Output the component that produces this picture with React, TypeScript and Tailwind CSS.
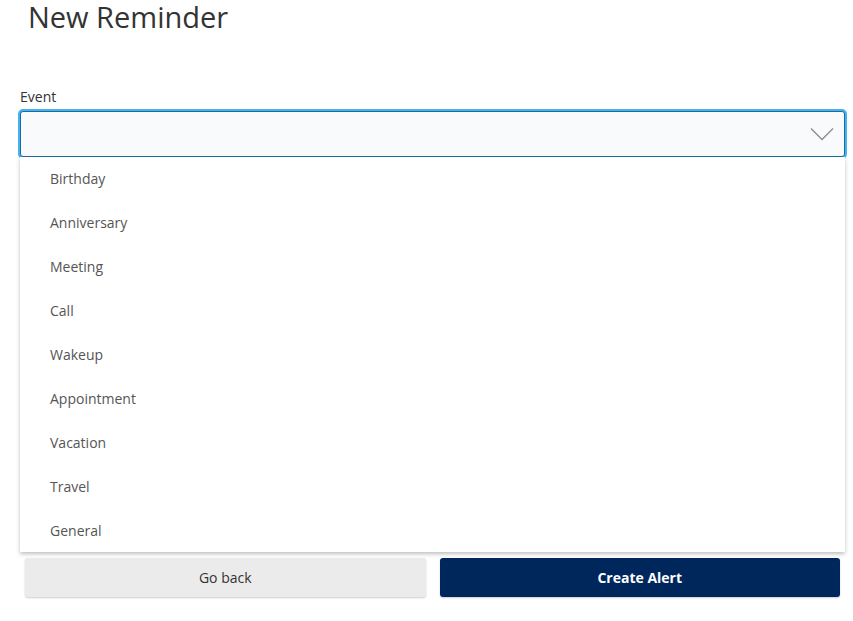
import React from "react";

const events = [
  "Birthday",
  "Anniversary",
  "Meeting",
  "Call",
  "Wakeup",
  "Appointment",
  "Vacation",
  "Travel",
  "General",
];

function Chevron() {
  return (
    <svg width="24" height="14" viewBox="0 0 24 14" fill="none">
      <path d="M1 1.5L12 12.5L23 1.5" stroke="#8c8c8c" strokeWidth="1.3" />
    </svg>
  );
}

export default function App() {
  return (
    <div
      className="min-h-screen bg-white text-[#333]"
      style={{ fontFamily: '"Open Sans", "Noto Sans", sans-serif' }}
    >
      <h1 className="pl-[28px] text-[29px] leading-[34px] font-normal text-[#333]">
        New Reminder
      </h1>

      <div className="ml-5 w-[825px] mt-[53px]">
        <label className="block text-[14px] leading-5 text-[#333] mb-[4px]">
          Event
        </label>
        <div className="flex items-center justify-between h-[46px] rounded-[3px] border border-[#1d6b9e] ring-2 ring-[#45b3f2] bg-[#f9fafc] pr-[10px]">
          <span />
          <Chevron />
        </div>

        <ul className="bg-white shadow-[0_2px_4px_rgba(0,0,0,0.25)]">
          {events.map((e) => (
            <li
              key={e}
              className="h-[43.9px] flex items-center pl-[30px] text-[14px] text-[#555]"
            >
              {e}
            </li>
          ))}
        </ul>

        <div className="mt-[6px] px-[5px] flex gap-[14px]">
          <button className="flex-1 h-[39px] rounded-[3px] bg-[#ebebeb] text-[14px] text-[#333] shadow-[0_1px_2px_rgba(0,0,0,0.2)]">
            Go back
          </button>
          <button className="flex-1 h-[39px] rounded-[3px] bg-[#00275c] text-[14px] font-bold text-white shadow-[0_1px_2px_rgba(0,0,0,0.2)]">
            Create Alert
          </button>
        </div>
      </div>
    </div>
  );
}
